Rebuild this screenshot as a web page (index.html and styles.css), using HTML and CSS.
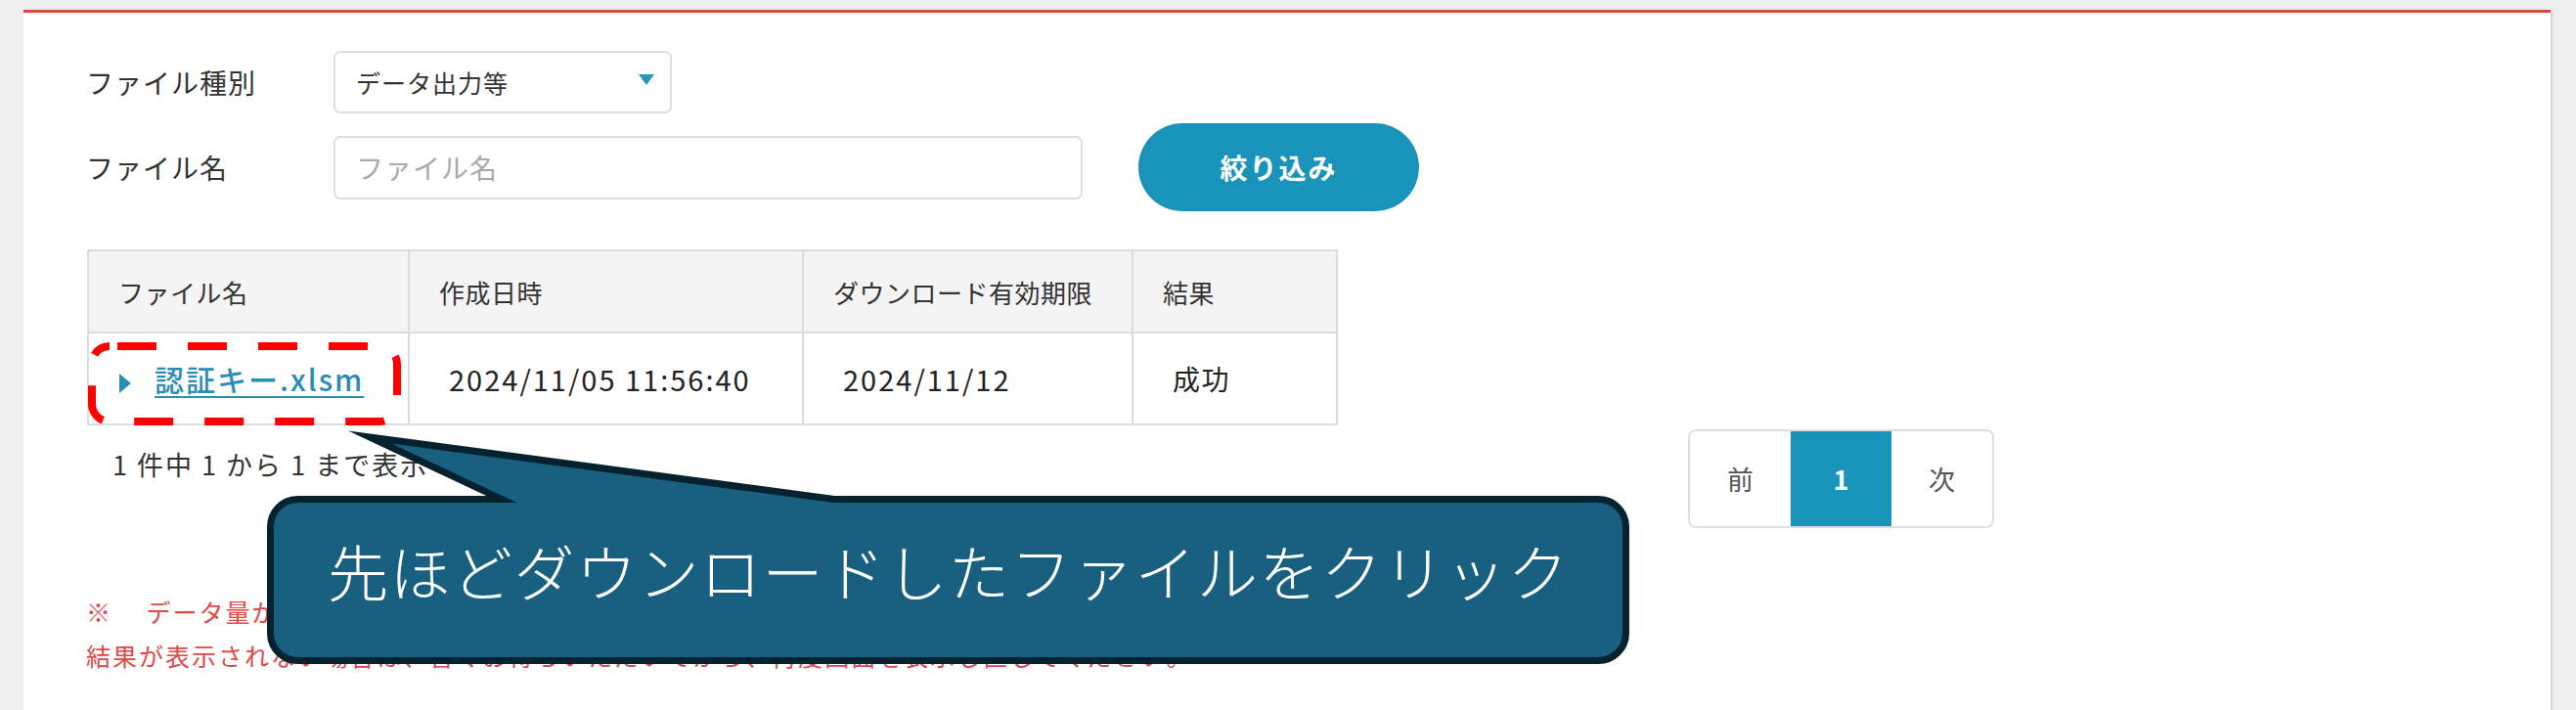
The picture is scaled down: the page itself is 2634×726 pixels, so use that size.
FILE: index.html
```html
<!DOCTYPE html>
<html lang="ja">
<head>
<meta charset="utf-8">
<title>ファイル一覧</title>
<link rel="stylesheet" href="styles.css">
</head>
<body>
<div class="card">
  <div class="filter">
    <div class="row row-type">
      <span class="label">ファイル種別</span>
      <div class="select">
        <span class="select-text">データ出力等</span>
        <span class="select-arrow"></span>
      </div>
    </div>
    <div class="row row-name">
      <span class="label">ファイル名</span>
      <div class="input"><span class="placeholder">ファイル名</span></div>
      <button class="btn-filter">絞り込み</button>
    </div>
  </div>

  <table class="files">
    <colgroup>
      <col class="c1"><col class="c2"><col class="c3"><col class="c4">
    </colgroup>
    <thead>
      <tr><th>ファイル名</th><th>作成日時</th><th>ダウンロード有効期限</th><th>結果</th></tr>
    </thead>
    <tbody>
      <tr>
        <td class="cell-link"><span class="tri"></span><a class="file-link" href="#">認証キー.xlsm</a></td>
        <td class="cell-date">2024/11/05 11:56:40</td>
        <td class="cell-date">2024/11/12</td>
        <td class="cell-result">成功</td>
      </tr>
    </tbody>
  </table>

  <div class="table-foot">
    <div class="info">1 件中 1 から 1 まで表示</div>
    <div class="pager">
      <span class="page">前</span>
      <span class="page active">1</span>
      <span class="page">次</span>
    </div>
  </div>

  <div class="notes">
    <p>※　 データ量が多い場合、結果が表示されるまでに時間がかかることがあります。</p>
    <p>結果が表示されない場合は、暫くお待ちいただいてから、再度画面を表示し直してください。</p>
  </div>
</div>

<svg class="mark" width="330" height="95" viewBox="0 0 330 95">
  <rect x="8" y="9" width="312" height="77" rx="18" ry="18" fill="none" stroke="#ff0000" stroke-width="8" stroke-dasharray="40 32" stroke-dashoffset="-8"/>
</svg>

<div class="callout">
  <svg class="callout-shape" width="1420" height="260" viewBox="0 0 1420 260">
    <path d="M44.5,80.5 H253 L118,17 L593,80.5 H1374.5 A28,28 0 0 1 1402.5,108.5 V217.5 A28,28 0 0 1 1374.5,245.5 H44.5 A28,28 0 0 1 16.5,217.5 V108.5 A28,28 0 0 1 44.5,80.5 Z" fill="#185f80" stroke="#06222f" stroke-width="7" stroke-linejoin="miter" stroke-miterlimit="10"/>
  </svg>
  <div class="callout-text">先ほどダウンロードしたファイルをクリック</div>
</div>
</body>
</html>
```

FILE: styles.css
```css
html, body {
  margin: 0;
  padding: 0;
}
body {
  position: relative;
  min-height: 726px;
  overflow: hidden;
  background: #efefef;
  font-family: "Noto Sans CJK JP", "Noto Sans", sans-serif;
  color: #333;
}
.card {
  margin: 10px 26px 0 24px;
  background: #fff;
  border-top: 3px solid #e0473f;
  box-shadow: 0 -2px 0 #e2eff3, 2px 0 2px rgba(0,0,0,0.12);
  padding: 39px 60px 140px 64px;
}
.row {
  display: flex;
  align-items: center;
}
.row-type { height: 64px; }
.row-name { height: 90px; margin-top: 10px; }
.label {
  width: 253px;
  font-size: 28px;
  letter-spacing: 1px;
  color: #333;
}
.select {
  box-sizing: border-box;
  width: 346px;
  height: 64px;
  border: 2px solid #dedede;
  border-radius: 7px;
  display: flex;
  align-items: center;
  justify-content: space-between;
  padding: 0 16px 0 21px;
}
.select-text {
  font-size: 25px;
  letter-spacing: 1px;
  color: #333;
}
.select-arrow {
  width: 0;
  height: 0;
  border-left: 8px solid transparent;
  border-right: 8px solid transparent;
  border-top: 11px solid #2a93b8;
  margin-top: -6px;
}
.input {
  box-sizing: border-box;
  width: 766px;
  height: 65px;
  border: 2px solid #dedede;
  border-radius: 7px;
  display: flex;
  align-items: center;
  padding-left: 21px;
}
.placeholder {
  font-size: 28px;
  letter-spacing: 1px;
  color: #a9a9a9;
}
.btn-filter {
  margin-left: 57px;
  width: 287px;
  height: 90px;
  border: none;
  border-radius: 45px;
  background: #1a93bb;
  color: #fff;
  font-family: inherit;
  font-size: 28px;
  font-weight: 700;
  letter-spacing: 2px;
}
.files {
  margin-top: 39px;
  margin-left: 1px;
  border-collapse: collapse;
  table-layout: fixed;
  width: 1277px;
  border: 2px solid #dcdcdc;
}
.c1 { width: 328px; }
.c2 { width: 403px; }
.c3 { width: 337px; }
.c4 { width: 209px; }
.files th, .files td {
  border: 2px solid #dcdcdc;
  text-align: left;
  white-space: nowrap;
}
.files th {
  height: 82px;
  padding: 0 0 0 30px;
  background: #f4f4f4;
  font-weight: 400;
  font-size: 26px;
  letter-spacing: 0.5px;
  color: #333;
}
.files td {
  height: 92px;
  padding: 0 0 0 40px;
  font-size: 28px;
  color: #222;
}
.files td.cell-link {
  padding-left: 31px;
}
.tri {
  display: inline-block;
  width: 0;
  height: 0;
  border-top: 10px solid transparent;
  border-bottom: 10px solid transparent;
  border-left: 12px solid #2a8db5;
  margin-right: 24px;
  vertical-align: -2px;
}
.file-link {
  color: #2a8db5;
  font-size: 30px;
  font-weight: 500;
  letter-spacing: 2px;
  text-decoration: underline;
  text-underline-offset: 5px;
  text-decoration-thickness: 2px;
}
.files td.cell-date {
  letter-spacing: 2px;
  font-size: 29px;
}
.cell-result {
  letter-spacing: 1.5px;
}
.table-foot {
  display: flex;
  margin-top: 4px;
}
.info {
  width: 1611px;
  padding-left: 27px;
  margin-top: 16px;
  font-size: 27px;
  letter-spacing: 2px;
  line-height: 39px;
  color: #333;
  align-self: flex-start;
}
.pager {
  display: flex;
  height: 101px;
  border: 2px solid #dedede;
  border-radius: 8px;
  box-sizing: border-box;
  overflow: hidden;
}
.page {
  width: 103px;
  display: flex;
  align-items: center;
  justify-content: center;
  font-size: 27px;
  color: #555;
}
.page.active {
  background: #1a93bb;
  color: #fff;
  font-weight: 700;
}
.notes {
  margin-top: 63px;
  color: #e04848;
  font-size: 25px;
  letter-spacing: 2px;
}
.notes p {
  margin: 0;
  line-height: 45px;
  white-space: nowrap;
}
.mark {
  position: absolute;
  left: 86px;
  top: 345px;
}
.callout {
  position: absolute;
  left: 260px;
  top: 430px;
  width: 1420px;
  height: 260px;
}
.callout-shape {
  position: absolute;
  left: 0;
  top: 0;
}
.callout-text {
  position: absolute;
  left: 75px;
  top: 80px;
  height: 166px;
  display: flex;
  align-items: center;
  padding-bottom: 20px;
  box-sizing: border-box;
  color: #fff;
  font-family: "Noto Sans CJK JP Light", "Noto Sans CJK JP DemiLight", "Noto Sans CJK JP", sans-serif;
  font-size: 62px;
  font-weight: 300;
  letter-spacing: 1.5px;
  white-space: nowrap;
}
```
